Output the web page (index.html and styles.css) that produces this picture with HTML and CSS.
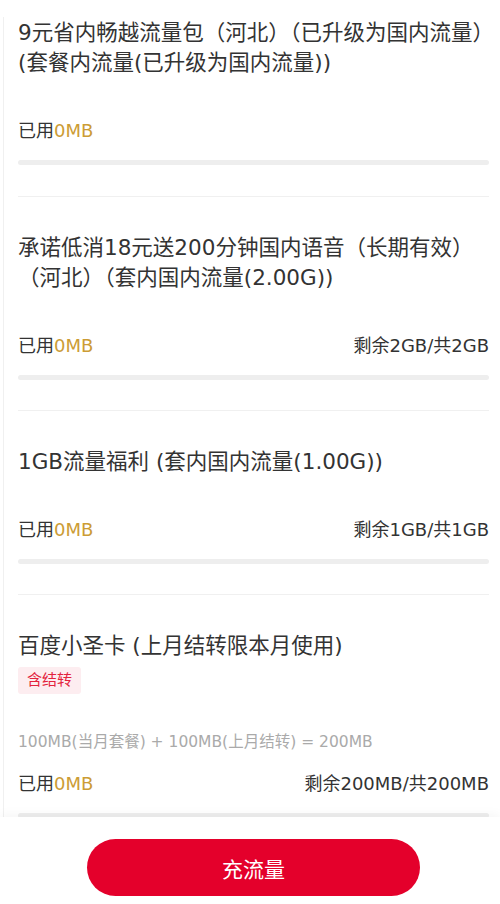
FILE: index.html
```html
<!DOCTYPE html>
<html lang="zh-CN">
<head>
  <meta charset="UTF-8">
  <meta name="viewport" content="width=device-width, initial-scale=1.0">
  <title>流量详情</title>
  <link rel="stylesheet" href="styles.css">
</head>
<body>
  <div class="list">
    <div class="card first">
      <div class="title">9元省内畅越流量包（河北）（已升级为国内流量）(套餐内流量(已升级为国内流量))</div>
      <div class="usage">
        <span>已用<em>0MB</em></span>
      </div>
      <div class="bar"></div>
    </div>

    <div class="card">
      <div class="title">承诺低消18元送200分钟国内语音（长期有效）（河北）（套内国内流量(2.00G))</div>
      <div class="usage">
        <span>已用<em>0MB</em></span>
        <span>剩余2GB/共2GB</span>
      </div>
      <div class="bar"></div>
    </div>

    <div class="card">
      <div class="title">1GB流量福利 (套内国内流量(1.00G))</div>
      <div class="usage">
        <span>已用<em>0MB</em></span>
        <span>剩余1GB/共1GB</span>
      </div>
      <div class="bar"></div>
    </div>

    <div class="card">
      <div class="title">百度小圣卡 (上月结转限本月使用)</div>
      <span class="tag">含结转</span>
      <div class="formula">100MB(当月套餐) + 100MB(上月结转) = 200MB</div>
      <div class="usage near">
        <span>已用<em>0MB</em></span>
        <span>剩余200MB/共200MB</span>
      </div>
      <div class="bar"></div>
    </div>
  </div>

  <div class="footer">
    <button class="recharge" type="button">充流量</button>
  </div>
</body>
</html>
```

FILE: styles.css
```css
/* General Styles */
body {
  margin: 0;
  height: 100vh;
  display: flex;
  flex-direction: column;
  background-color: #fff;
  font-family: "DejaVu Sans", "Noto Sans CJK SC", sans-serif;
  color: #333;
}

/* List */
.list {
  flex: 1;
  overflow: hidden;
  margin: 17px 0 0 3px;
  padding: 0 11px 0 14px;
  border-left: 1px solid #f0f0f0;
}

.card {
  padding: 36px 0 30px;
  border-bottom: 1px solid #f0f0f0;
}

.card.first {
  padding-top: 1px;
  padding-bottom: 31px;
}

.title {
  font-size: 21.5px;
  line-height: 30px;
  color: #333;
}

.tag {
  display: inline-block;
  margin-top: 6px;
  padding: 0 9px;
  height: 27px;
  line-height: 27px;
  font-size: 15px;
  color: #e3233d;
  background-color: #fdedf0;
  border-radius: 3px;
}

.formula {
  margin-top: 37px;
  font-size: 15.5px;
  line-height: 22px;
  color: #aaa;
}

/* Usage row */
.usage {
  display: flex;
  justify-content: space-between;
  margin-top: 41px;
  font-size: 18px;
  line-height: 24px;
  color: #333;
}

.usage.near {
  margin-top: 19px;
}

.usage em {
  font-style: normal;
  color: #cc9c35;
}

.bar {
  margin-top: 17px;
  height: 5px;
  border-radius: 3px;
  background-color: #eee;
}

/* Footer */
.footer {
  height: 87px;
  padding-top: 22px;
  box-sizing: border-box;
  background-color: #fff;
  box-shadow: 0 -3px 10px rgba(0, 0, 0, 0.04);
}

.recharge {
  display: block;
  width: 333px;
  height: 57px;
  margin-left: 87px;
  border: none;
  border-radius: 29px;
  background-color: #e4002b;
  color: #fff;
  font-family: inherit;
  font-size: 21px;
  cursor: pointer;
}
```
